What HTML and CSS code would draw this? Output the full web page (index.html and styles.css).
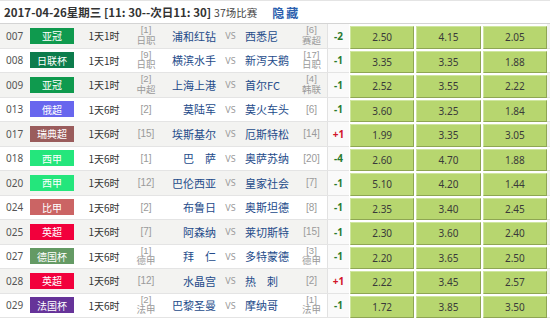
FILE: index.html
```html
<!DOCTYPE html>
<html lang="zh-CN">
<head>
<meta charset="utf-8">
<title>赛事列表</title>
<link rel="stylesheet" href="styles.css">
</head>
<body>
<div class="board">
  <div class="head">
    <span class="date">2017-04-26星期三 [11: 30--次日11: 30]</span>
    <span class="count">37场比赛</span>
    <span class="hide">隐藏</span>
  </div>

  <div class="row alt">
    <span class="num">007</span><span class="lg"><b class="badge c-acl">亚冠</b></span><span class="time">1天1时</span>
    <span class="rank"><span class="ln">[1]</span><span class="ln">日职</span></span><span class="home">浦和红钻</span><span class="vs">VS</span><span class="away">西悉尼</span><span class="rank"><span class="ln">[6]</span><span class="ln">赛超</span></span>
    <span class="hcp neg">-2</span>
    <span class="odds"><i>2.50</i><i>4.15</i><i>2.05</i></span>
  </div>
  <div class="row">
    <span class="num">008</span><span class="lg"><b class="badge c-jlc">日联杯</b></span><span class="time">1天1时</span>
    <span class="rank"><span class="ln">[9]</span><span class="ln">日职</span></span><span class="home">横滨水手</span><span class="vs">VS</span><span class="away">新泻天鹅</span><span class="rank"><span class="ln">[17]</span><span class="ln">日职</span></span>
    <span class="hcp neg">-1</span>
    <span class="odds"><i>3.35</i><i>3.35</i><i>1.88</i></span>
  </div>
  <div class="row alt">
    <span class="num">009</span><span class="lg"><b class="badge c-acl">亚冠</b></span><span class="time">1天1时</span>
    <span class="rank"><span class="ln">[2]</span><span class="ln">中超</span></span><span class="home">上海上港</span><span class="vs">VS</span><span class="away">首尔FC</span><span class="rank"><span class="ln">[4]</span><span class="ln">韩联</span></span>
    <span class="hcp neg">-1</span>
    <span class="odds"><i>2.52</i><i>3.55</i><i>2.22</i></span>
  </div>
  <div class="row">
    <span class="num">013</span><span class="lg"><b class="badge c-rus">俄超</b></span><span class="time">1天6时</span>
    <span class="rank one">[2]</span><span class="home">莫陆军</span><span class="vs">VS</span><span class="away">莫火车头</span><span class="rank one">[6]</span>
    <span class="hcp neg">-1</span>
    <span class="odds"><i>3.60</i><i>3.25</i><i>1.84</i></span>
  </div>
  <div class="row alt">
    <span class="num">017</span><span class="lg"><b class="badge c-swe">瑞典超</b></span><span class="time">1天6时</span>
    <span class="rank one">[15]</span><span class="home">埃斯基尔</span><span class="vs">VS</span><span class="away">厄斯特松</span><span class="rank one">[14]</span>
    <span class="hcp pos">+1</span>
    <span class="odds"><i>1.99</i><i>3.35</i><i>3.05</i></span>
  </div>
  <div class="row">
    <span class="num">018</span><span class="lg"><b class="badge c-esp">西甲</b></span><span class="time">1天6时</span>
    <span class="rank one">[1]</span><span class="home">巴　萨</span><span class="vs">VS</span><span class="away">奥萨苏纳</span><span class="rank one">[20]</span>
    <span class="hcp neg">-4</span>
    <span class="odds"><i>2.60</i><i>4.70</i><i>1.88</i></span>
  </div>
  <div class="row alt">
    <span class="num">020</span><span class="lg"><b class="badge c-esp">西甲</b></span><span class="time">1天6时</span>
    <span class="rank one">[12]</span><span class="home">巴伦西亚</span><span class="vs">VS</span><span class="away">皇家社会</span><span class="rank one">[7]</span>
    <span class="hcp neg">-1</span>
    <span class="odds"><i>5.10</i><i>4.20</i><i>1.44</i></span>
  </div>
  <div class="row">
    <span class="num">024</span><span class="lg"><b class="badge c-bel">比甲</b></span><span class="time">1天6时</span>
    <span class="rank one">[2]</span><span class="home">布鲁日</span><span class="vs">VS</span><span class="away">奥斯坦德</span><span class="rank one">[8]</span>
    <span class="hcp neg">-1</span>
    <span class="odds"><i>2.35</i><i>3.40</i><i>2.45</i></span>
  </div>
  <div class="row alt">
    <span class="num">025</span><span class="lg"><b class="badge c-epl">英超</b></span><span class="time">1天6时</span>
    <span class="rank one">[7]</span><span class="home">阿森纳</span><span class="vs">VS</span><span class="away">莱切斯特</span><span class="rank one">[15]</span>
    <span class="hcp neg">-1</span>
    <span class="odds"><i>2.30</i><i>3.60</i><i>2.40</i></span>
  </div>
  <div class="row">
    <span class="num">027</span><span class="lg"><b class="badge c-dfb">德国杯</b></span><span class="time">1天6时</span>
    <span class="rank"><span class="ln">[1]</span><span class="ln">德甲</span></span><span class="home">拜　仁</span><span class="vs">VS</span><span class="away">多特蒙德</span><span class="rank"><span class="ln">[3]</span><span class="ln">德甲</span></span>
    <span class="hcp neg">-1</span>
    <span class="odds"><i>2.20</i><i>3.65</i><i>2.50</i></span>
  </div>
  <div class="row alt">
    <span class="num">028</span><span class="lg"><b class="badge c-epl">英超</b></span><span class="time">1天6时</span>
    <span class="rank one">[12]</span><span class="home">水晶宫</span><span class="vs">VS</span><span class="away">热　刺</span><span class="rank one">[2]</span>
    <span class="hcp pos">+1</span>
    <span class="odds"><i>2.22</i><i>3.45</i><i>2.57</i></span>
  </div>
  <div class="row">
    <span class="num">029</span><span class="lg"><b class="badge c-cdf">法国杯</b></span><span class="time">1天6时</span>
    <span class="rank"><span class="ln">[2]</span><span class="ln">法甲</span></span><span class="home">巴黎圣曼</span><span class="vs">VS</span><span class="away">摩纳哥</span><span class="rank"><span class="ln">[1]</span><span class="ln">法甲</span></span>
    <span class="hcp neg">-1</span>
    <span class="odds"><i>1.72</i><i>3.85</i><i>3.50</i></span>
  </div>
</div>
</body>
</html>
```

FILE: styles.css
```css
html, body {
  margin: 0;
  padding: 0;
  background: #ffffff;
}

.board {
  width: 550px;
  font-family: "Noto Sans", "Noto Sans CJK SC", sans-serif;
  color: #333333;
}

.head {
  height: 24px;
  box-sizing: border-box;
  border-top: 1px solid #e4e4e4;
  border-bottom: 1px solid #d4d4d4;
  display: flex;
  align-items: center;
  padding-left: 4px;
  white-space: nowrap;
}

.date {
  font-family: "Noto Sans CJK SC", sans-serif;
  font-weight: 700;
  font-size: 11.5px;
  color: #333333;
}

.count {
  font-family: "Noto Sans CJK SC", sans-serif;
  font-size: 10.5px;
  color: #444444;
  margin-left: 3px;
}

.hide {
  font-family: "Noto Sans CJK SC", sans-serif;
  font-weight: 700;
  font-size: 12px;
  letter-spacing: 2px;
  color: #2b5fae;
  margin-left: 15px;
}

.row {
  height: 24.5px;
  box-sizing: border-box;
  border-bottom: 1px solid #e4e4e4;
  display: grid;
  grid-template-columns: 28px 48px 56px 28px 56px 29px 51px 31px 22px 198px;
  align-items: center;
  white-space: nowrap;
}

.row.alt {
  background: #f3f3f1;
}

.num {
  padding-left: 6px;
  font-size: 10px;
  color: #555555;
}

.lg {
  display: flex;
  padding-left: 2px;
}

.badge {
  width: 44px;
  height: 16px;
  display: flex;
  align-items: center;
  justify-content: center;
  font-family: "Noto Sans CJK SC", sans-serif;
  font-weight: 400;
  font-size: 10px;
  color: #ffffff;
}

.c-acl { background: #0f9a4e; }
.c-jlc { background: #0c7c4c; }
.c-rus { background: #6866ee; }
.c-swe { background: #9a5c5c; }
.c-esp { background: #24e67c; }
.c-bel { background: #cb6464; }
.c-epl { background: #f2003c; }
.c-dfb { background: #649a64; }
.c-cdf { background: #663399; }

.time {
  text-align: center;
  font-family: "Noto Sans CJK SC", sans-serif;
  font-size: 10px;
  color: #333333;
}

.rank {
  display: flex;
  flex-direction: column;
  align-items: center;
  font-family: "Liberation Sans", "Noto Sans CJK SC", sans-serif;
  font-size: 9.5px;
  color: #9a9a9a;
}

.rank .ln {
  display: block;
  height: 10.5px;
  line-height: 10.5px;
}

.rank.one {
  display: block;
  text-align: center;
  font-size: 10px;
}

.home, .away {
  font-family: "Noto Sans CJK SC", sans-serif;
  font-size: 11px;
  color: #244b8a;
}

.home {
  text-align: right;
}

.away {
  text-align: left;
}

.vs {
  text-align: center;
  font-size: 9px;
  color: #9a9a9a;
}

.hcp {
  align-self: stretch;
  display: flex;
  align-items: center;
  justify-content: center;
  border-left: 1px solid #e2e2e2;
  background: #fafafa;
  font-size: 10px;
  font-weight: 700;
}

.hcp.neg { color: #2a7a2e; }
.hcp.pos { color: #d2142a; }

.odds {
  align-self: stretch;
  box-sizing: border-box;
  padding: 2px 0 0 1px;
  margin-bottom: -1px;
  display: grid;
  grid-template-columns: repeat(3, 1fr);
  column-gap: 2px;
  background: #ffffff;
}

.odds i {
  font-style: normal;
  display: flex;
  align-items: center;
  justify-content: center;
  box-sizing: border-box;
  background: #b7d66f;
  border-top: 1px solid #cfe6a0;
  border-left: 1px solid #cfe6a0;
  border-right: 1px solid #8ea653;
  border-bottom: 1px solid #8ea653;
  font-size: 10px;
  color: #3a3a3a;
}
```
